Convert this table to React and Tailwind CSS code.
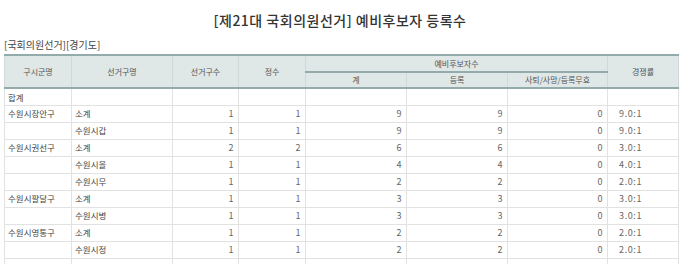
import React from "react";

const rows = [
  { a: "합계", b: "", c: "", d: "", e: "", f: "", g: "", h: "" },
  { a: "수원시장안구", b: "소계", c: "1", d: "1", e: "9", f: "9", g: "0", h: "9.0:1" },
  { a: "", b: "수원시갑", c: "1", d: "1", e: "9", f: "9", g: "0", h: "9.0:1" },
  { a: "수원시권선구", b: "소계", c: "2", d: "2", e: "6", f: "6", g: "0", h: "3.0:1" },
  { a: "", b: "수원시을", c: "1", d: "1", e: "4", f: "4", g: "0", h: "4.0:1" },
  { a: "", b: "수원시무", c: "1", d: "1", e: "2", f: "2", g: "0", h: "2.0:1" },
  { a: "수원시팔달구", b: "소계", c: "1", d: "1", e: "3", f: "3", g: "0", h: "3.0:1" },
  { a: "", b: "수원시병", c: "1", d: "1", e: "3", f: "3", g: "0", h: "3.0:1" },
  { a: "수원시영통구", b: "소계", c: "1", d: "1", e: "2", f: "2", g: "0", h: "2.0:1" },
  { a: "", b: "수원시정", c: "1", d: "1", e: "2", f: "2", g: "0", h: "2.0:1" },
  { a: "", b: "", c: "", d: "", e: "", f: "", g: "", h: "" },
];

const td = "border border-[#e2e2e2] h-[17px] p-0 leading-none";
const ko = "text-[8.5px] pl-[3px] text-left text-[#444]";
const num = "text-[9px] tracking-[0.5px] pr-[4px] text-right text-[#666]";
const th1 = "border-x border-x-[#cfd9d9] border-t-2 border-t-[#93abab] border-b-2 border-b-[#93abab] font-normal p-0";
const th2 = "border-x border-x-[#cfd9d9] border-b-2 border-b-[#93abab] font-normal p-0";

export default function App() {
  return (
    <div
      className="w-[680px] h-[264px] overflow-hidden bg-white"
      style={{ fontFamily: '"Noto Sans CJK KR", "Noto Sans", sans-serif' }}
    >
      <div className="h-[39px] pt-[10px] text-center text-[14px] leading-[20px] font-medium text-[#333] tracking-[0.5px]">
        [제21대 국회의원선거] 예비후보자 등록수
      </div>
      <div className="pl-[4px] h-[15px] text-[10px] leading-[12px] text-[#444]">[국회의원선거][경기도]</div>
      <table className="ml-[4px] w-[674px] table-fixed border-collapse">
        <colgroup>
          <col className="w-[67px]" />
          <col className="w-[101px]" />
          <col className="w-[66px]" />
          <col className="w-[67px]" />
          <col className="w-[101px]" />
          <col className="w-[101px]" />
          <col className="w-[100px]" />
          <col className="w-[71px]" />
        </colgroup>
        <thead>
          <tr className="bg-[#dfe7e7] text-[8px] text-[#555]">
            <th rowSpan={2} className={th1}>구시군명</th>
            <th rowSpan={2} className={th1}>선거구명</th>
            <th rowSpan={2} className={th1}>선거구수</th>
            <th rowSpan={2} className={th1}>정수</th>
            <th colSpan={3} className={`${th1} h-[17px]`}>예비후보자수</th>
            <th rowSpan={2} className={th1}>경쟁률</th>
          </tr>
          <tr className="bg-[#dfe7e7] text-[8px] text-[#555]">
            <th className={`${th2} h-[16px]`}>계</th>
            <th className={th2}>등록</th>
            <th className={th2}>사퇴/사망/등록무효</th>
          </tr>
        </thead>
        <tbody>
          {rows.map((r, i) => (
            <tr key={i}>
              <td className={`${td} ${ko}`}>{r.a}</td>
              <td className={`${td} ${ko}`}>{r.b}</td>
              <td className={`${td} ${num}`}>{r.c}</td>
              <td className={`${td} ${num}`}>{r.d}</td>
              <td className={`${td} ${num}`}>{r.e}</td>
              <td className={`${td} ${num}`}>{r.f}</td>
              <td className={`${td} ${num}`}>{r.g}</td>
              <td className={`${td} text-[9px] tracking-[0.6px] pl-[11px] text-left text-[#666]`}>{r.h}</td>
            </tr>
          ))}
        </tbody>
      </table>
    </div>
  );
}
